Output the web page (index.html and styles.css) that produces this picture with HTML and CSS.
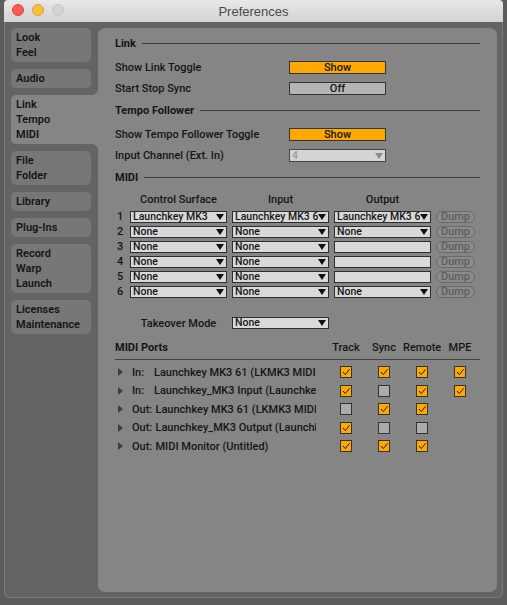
FILE: index.html
```html
<!DOCTYPE html>
<html>
<head>
<meta charset="utf-8">
<title>Preferences</title>
<link rel="stylesheet" href="styles.css">
</head>
<body>
<div class="window">
  <div class="titlebar">
    <div class="lights"><span class="light red"></span><span class="light yellow"></span><span class="light gray"></span></div>
    <div class="title">Preferences</div>
    <div></div>
  </div>
  <div class="wbody">
    <nav class="sidebar">
      <div class="tab">Look<br>Feel</div>
      <div class="tab">Audio</div>
      <div class="tab sel">Link<br>Tempo<br>MIDI</div>
      <div class="tab">File<br>Folder</div>
      <div class="tab">Library</div>
      <div class="tab">Plug-Ins</div>
      <div class="tab">Record<br>Warp<br>Launch</div>
      <div class="tab">Licenses<br>Maintenance</div>
    </nav>
    <main class="panel">
      <div class="sec sec-link">Link</div>
      <div class="frow r1"><span class="flabel">Show Link Toggle</span><span class="btn on">Show</span></div>
      <div class="frow r2"><span class="flabel">Start Stop Sync</span><span class="btn off">Off</span></div>
      <div class="sec sec-tempo">Tempo Follower</div>
      <div class="frow r3"><span class="flabel">Show Tempo Follower Toggle</span><span class="btn on">Show</span></div>
      <div class="frow r4"><span class="flabel">Input Channel (Ext. In)</span><span class="dd dis"><span class="val">4</span><span class="arr"></span></span></div>
      <div class="sec sec-midi">MIDI</div>

      <div class="mgrid mhead">
        <span></span><span class="ch">Control Surface</span><span class="ch">Input</span><span class="ch">Output</span><span></span>
      </div>
      <div class="mgrid mrows">
        <span class="num">1</span>
        <span class="dd"><span class="val">Launchkey MK3</span><span class="arr"></span></span>
        <span class="dd"><span class="val">Launchkey MK3 61 (LKMK3 MIDI Out)</span><span class="arr"></span></span>
        <span class="dd"><span class="val">Launchkey MK3 61 (LKMK3 MIDI In)</span><span class="arr"></span></span>
        <span class="dump">Dump</span>

        <span class="num">2</span>
        <span class="dd"><span class="val">None</span><span class="arr"></span></span>
        <span class="dd"><span class="val">None</span><span class="arr"></span></span>
        <span class="dd"><span class="val">None</span><span class="arr"></span></span>
        <span class="dump">Dump</span>

        <span class="num">3</span>
        <span class="dd"><span class="val">None</span><span class="arr"></span></span>
        <span class="dd"><span class="val">None</span><span class="arr"></span></span>
        <span class="dd empty"></span>
        <span class="dump">Dump</span>

        <span class="num">4</span>
        <span class="dd"><span class="val">None</span><span class="arr"></span></span>
        <span class="dd"><span class="val">None</span><span class="arr"></span></span>
        <span class="dd empty"></span>
        <span class="dump">Dump</span>

        <span class="num">5</span>
        <span class="dd"><span class="val">None</span><span class="arr"></span></span>
        <span class="dd"><span class="val">None</span><span class="arr"></span></span>
        <span class="dd empty"></span>
        <span class="dump">Dump</span>

        <span class="num">6</span>
        <span class="dd"><span class="val">None</span><span class="arr"></span></span>
        <span class="dd"><span class="val">None</span><span class="arr"></span></span>
        <span class="dd"><span class="val">None</span><span class="arr"></span></span>
        <span class="dump">Dump</span>
      </div>

      <div class="mgrid takeover">
        <span></span><span class="ch">Takeover Mode</span>
        <span class="dd"><span class="val">None</span><span class="arr"></span></span>
      </div>

      <div class="pgrid phead">
        <span class="ptitle">MIDI Ports</span><span class="pc">Track</span><span class="pc">Sync</span><span class="pc">Remote</span><span class="pc">MPE</span>
      </div>

      <div class="pgrid prow">
        <div class="pname"><svg class="tri" viewBox="0 0 5 8"><polygon points="0,0 5,4 0,8"/></svg><span class="io">In:</span>Launchkey MK3 61 (LKMK3 MIDI Out)</div>
        <span class="cell"><span class="cb on"><svg viewBox="0 0 10 10"><path d="M2 5 L4.3 7.6 L8.6 2.3"/></svg></span></span>
        <span class="cell"><span class="cb on"><svg viewBox="0 0 10 10"><path d="M2 5 L4.3 7.6 L8.6 2.3"/></svg></span></span>
        <span class="cell"><span class="cb on"><svg viewBox="0 0 10 10"><path d="M2 5 L4.3 7.6 L8.6 2.3"/></svg></span></span>
        <span class="cell"><span class="cb on"><svg viewBox="0 0 10 10"><path d="M2 5 L4.3 7.6 L8.6 2.3"/></svg></span></span>
      </div>
      <div class="pgrid prow">
        <div class="pname"><svg class="tri" viewBox="0 0 5 8"><polygon points="0,0 5,4 0,8"/></svg><span class="io">In:</span>Launchkey_MK3 Input (Launchkey MK3 61)</div>
        <span class="cell"><span class="cb on"><svg viewBox="0 0 10 10"><path d="M2 5 L4.3 7.6 L8.6 2.3"/></svg></span></span>
        <span class="cell"><span class="cb"></span></span>
        <span class="cell"><span class="cb on"><svg viewBox="0 0 10 10"><path d="M2 5 L4.3 7.6 L8.6 2.3"/></svg></span></span>
        <span class="cell"><span class="cb on"><svg viewBox="0 0 10 10"><path d="M2 5 L4.3 7.6 L8.6 2.3"/></svg></span></span>
      </div>
      <div class="pgrid prow">
        <div class="pname"><svg class="tri" viewBox="0 0 5 8"><polygon points="0,0 5,4 0,8"/></svg><span class="io out">Out:</span>Launchkey MK3 61 (LKMK3 MIDI In)</div>
        <span class="cell"><span class="cb"></span></span>
        <span class="cell"><span class="cb on"><svg viewBox="0 0 10 10"><path d="M2 5 L4.3 7.6 L8.6 2.3"/></svg></span></span>
        <span class="cell"><span class="cb on"><svg viewBox="0 0 10 10"><path d="M2 5 L4.3 7.6 L8.6 2.3"/></svg></span></span>
        <span class="cell"></span>
      </div>
      <div class="pgrid prow">
        <div class="pname"><svg class="tri" viewBox="0 0 5 8"><polygon points="0,0 5,4 0,8"/></svg><span class="io out">Out:</span>Launchkey_MK3 Output (Launchkey MK3 61)</div>
        <span class="cell"><span class="cb on"><svg viewBox="0 0 10 10"><path d="M2 5 L4.3 7.6 L8.6 2.3"/></svg></span></span>
        <span class="cell"><span class="cb"></span></span>
        <span class="cell"><span class="cb"></span></span>
        <span class="cell"></span>
      </div>
      <div class="pgrid prow">
        <div class="pname"><svg class="tri" viewBox="0 0 5 8"><polygon points="0,0 5,4 0,8"/></svg><span class="io out">Out:</span>MIDI Monitor (Untitled)</div>
        <span class="cell"><span class="cb on"><svg viewBox="0 0 10 10"><path d="M2 5 L4.3 7.6 L8.6 2.3"/></svg></span></span>
        <span class="cell"><span class="cb on"><svg viewBox="0 0 10 10"><path d="M2 5 L4.3 7.6 L8.6 2.3"/></svg></span></span>
        <span class="cell"><span class="cb on"><svg viewBox="0 0 10 10"><path d="M2 5 L4.3 7.6 L8.6 2.3"/></svg></span></span>
        <span class="cell"></span>
      </div>
    </main>
  </div>
</div>
</body>
</html>
```

FILE: styles.css
```css
* { box-sizing: border-box; }
html, body { margin: 0; padding: 0; }
body {
  width: 507px;
  height: 605px;
  overflow: hidden;
  background: #5c5c5c;
  font-family: Roboto, "Liberation Sans", sans-serif;
  font-size: 11px;
  font-weight: 500;
  color: #151515;
}

.window {
  margin-left: 4px;
  width: 499px;
  height: 598px;
  display: flex;
  flex-direction: column;
}

.titlebar {
  height: 22px;
  flex: none;
  display: grid;
  grid-template-columns: 1fr auto 1fr;
  align-items: center;
  background: linear-gradient(#e8e8e8, #d3d3d3);
  border-radius: 4px 4px 0 0;
}
.lights { display: flex; gap: 8px; padding-left: 8px; margin-top: -2px; }
.light { width: 12px; height: 12px; border-radius: 50%; display: block; }
.light.red { background: #fc5b57; border: 1px solid #e1443f; }
.light.yellow { background: #fdbc3f; border: 1px solid #e0a12f; }
.light.gray { background: #d4d4d4; border: 1px solid #c2c2c2; }
.title {
  font-family: "Liberation Sans", Arial, sans-serif;
  font-size: 13px;
  font-weight: 400;
  color: #4b4b4b;
}

.wbody {
  flex: 1;
  display: flex;
  background: #646464;
  border: 1px solid #7a7a7a;
  border-top: none;
  border-radius: 0 0 6px 6px;
  padding: 6px 5px 5px 6px;
}

.sidebar {
  width: 87px;
  flex: none;
  display: flex;
  flex-direction: column;
  gap: 7px;
}
.tab {
  width: 80px;
  background: #777777;
  border-radius: 5px;
  padding: 2px 5px;
  line-height: 15px;
  font-weight: 600;
  color: #141414;
}
.tab.sel {
  width: 87px;
  background: #858585;
  border-radius: 5px 0 0 5px;
  position: relative;
}
.tab.sel::before,
.tab.sel::after {
  content: "";
  position: absolute;
  right: 0;
  width: 6px;
  height: 6px;
}
.tab.sel::before {
  top: -6px;
  background: radial-gradient(circle at 0 0, transparent 5.5px, #858585 6.2px);
}
.tab.sel::after {
  bottom: -6px;
  background: radial-gradient(circle at 0 100%, transparent 5.5px, #858585 6.2px);
}

.panel {
  flex: 1;
  background: #858585;
  border-radius: 7px;
  padding: 7px 17px 0 17px;
}

.sec {
  display: flex;
  align-items: center;
  height: 16px;
  font-weight: 700;
}
.sec::after {
  content: "";
  flex: 1;
  height: 1px;
  background: #3c3c3c;
  margin-left: 6px;
}
.sec-tempo { margin-top: 7px; }
.sec-midi { margin-top: 7px; }

.frow {
  display: flex;
  align-items: center;
  height: 13px;
}
.r1 { margin-top: 10px; }
.r2 { margin-top: 8px; }
.r3 { margin-top: 10px; }
.r4 { margin-top: 8px; }
.flabel { width: 174px; flex: none; }

.btn {
  width: 97px;
  height: 13px;
  border: 1px solid #333;
  display: flex;
  align-items: center;
  justify-content: center;
  font-size: 11px;
  line-height: 11px;
}
.btn.on { background: #ffa800; }
.btn.off { background: #b4b4b4; }

.dd {
  height: 12px;
  border: 1px solid #2e2e2e;
  background: #d9d9d9;
  display: flex;
  align-items: center;
  padding: 0 2px 0 2px;
  font-size: 10.5px;
  font-weight: 500;
  line-height: 10px;
  overflow: hidden;
}
.frow .dd { width: 97px; height: 13px; }
.dd .val {
  flex: 1;
  min-width: 0;
  white-space: nowrap;
  overflow: hidden;
}
.dd .arr {
  flex: none;
  width: 0;
  height: 0;
  border-left: 4px solid transparent;
  border-right: 4px solid transparent;
  border-top: 6px solid #111;
}
.dd.dis { border-color: #454545; background: #d4d4d4; }
.dd.dis .val { color: #9c9c9c; }
.dd.dis .arr { border-top-color: #8a8a8a; }

.mgrid {
  display: grid;
  grid-template-columns: 10px 97px 97px 97px 39px;
  column-gap: 5px;
  align-items: center;
}
.mhead { margin-top: 7px; height: 14px; }
.ch { text-align: center; white-space: nowrap; }
.mrows { margin-top: 5px; row-gap: 3px; grid-auto-rows: 12px; }
.num { padding-left: 2px; line-height: 12px; }
.dump {
  height: 12px;
  border: 1px solid #6a6a6a;
  border-radius: 6px;
  background: #8b8b8b;
  color: #5e5e5e;
  display: flex;
  align-items: center;
  justify-content: center;
  font-weight: 500;
  line-height: 10px;
}
.takeover { margin-top: 19px; grid-auto-rows: 12px; }

.pgrid {
  display: grid;
  grid-template-columns: 212px repeat(4, 38px);
  align-items: center;
}
.phead {
  margin-top: 10px;
  height: 21px;
  padding-bottom: 3px;
  border-bottom: 1px solid #444;
}
.ptitle { font-weight: 700; }
.pc { text-align: center; white-space: nowrap; }

.prow { height: 18.5px; }
.phead + .prow { margin-top: 3px; }
.pname {
  display: flex;
  align-items: center;
  width: 201px;
  overflow: hidden;
  white-space: nowrap;
}
.tri { width: 5px; height: 8px; margin-left: 3px; fill: #3e3e3e; flex: none; }
.io { width: 22px; flex: none; margin-left: 9px; }
.io.out { width: 23.5px; }
.cell { display: flex; justify-content: center; }
.cb {
  width: 12px;
  height: 12px;
  border: 1px solid #333;
  background: #ababab;
  display: block;
}
.cb.on { background: #ffa800; }
.cb svg { display: block; width: 10px; height: 10px; fill: none; stroke: #1a1a1a; stroke-width: 1; }
```
